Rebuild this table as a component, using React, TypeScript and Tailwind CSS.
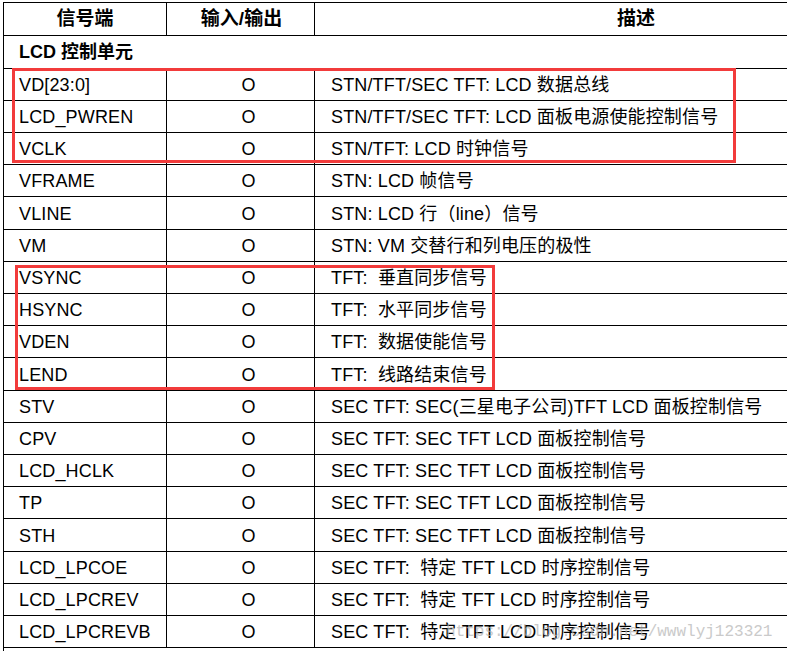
import React from "react";

type Row = { name: string; io: string; desc: string; h: string };

const rows: Row[] = [
  { name: "VD[23:0]", io: "O", desc: "STN/TFT/SEC TFT: LCD 数据总线", h: "h-[32px]" },
  { name: "LCD_PWREN", io: "O", desc: "STN/TFT/SEC TFT: LCD 面板电源使能控制信号", h: "h-[32px]" },
  { name: "VCLK", io: "O", desc: "STN/TFT: LCD 时钟信号", h: "h-[32px]" },
  { name: "VFRAME", io: "O", desc: "STN: LCD 帧信号", h: "h-[32px]" },
  { name: "VLINE", io: "O", desc: "STN: LCD 行（line）信号", h: "h-[33px]" },
  { name: "VM", io: "O", desc: "STN: VM 交替行和列电压的极性", h: "h-[32px]" },
  { name: "VSYNC", io: "O", desc: "TFT:  垂直同步信号", h: "h-[32px]" },
  { name: "HSYNC", io: "O", desc: "TFT:  水平同步信号", h: "h-[32px]" },
  { name: "VDEN", io: "O", desc: "TFT:  数据使能信号", h: "h-[32px]" },
  { name: "LEND", io: "O", desc: "TFT:  线路结束信号", h: "h-[33px]" },
  { name: "STV", io: "O", desc: "SEC TFT: SEC(三星电子公司)TFT LCD 面板控制信号", h: "h-[32px]" },
  { name: "CPV", io: "O", desc: "SEC TFT: SEC TFT LCD 面板控制信号", h: "h-[32px]" },
  { name: "LCD_HCLK", io: "O", desc: "SEC TFT: SEC TFT LCD 面板控制信号", h: "h-[32px]" },
  { name: "TP", io: "O", desc: "SEC TFT: SEC TFT LCD 面板控制信号", h: "h-[32px]" },
  { name: "STH", io: "O", desc: "SEC TFT: SEC TFT LCD 面板控制信号", h: "h-[33px]" },
  { name: "LCD_LPCOE", io: "O", desc: "SEC TFT:  特定 TFT LCD 时序控制信号", h: "h-[32px]" },
  { name: "LCD_LPCREV", io: "O", desc: "SEC TFT:  特定 TFT LCD 时序控制信号", h: "h-[32px]" },
  { name: "LCD_LPCREVB", io: "O", desc: "SEC TFT:  特定 TFT LCD 时序控制信号", h: "h-[32px]" },
];

export default function App() {
  return (
    <div
      className="relative w-[787px] h-[651px] overflow-hidden bg-white text-black"
      style={{ fontFamily: '"Liberation Sans", Arial, "Noto Sans CJK SC", sans-serif' }}
    >
      <div className="mt-[2px] ml-[3px] w-[953px] border-l border-t border-black">
        {/* header */}
        <div className="flex h-[33px] border-b border-black text-[19px] font-bold">
          <div className="w-[163px] shrink-0 border-r border-black flex items-center justify-center">信号端</div>
          <div className="w-[148px] shrink-0 border-r border-black flex items-center justify-center pl-[2px]">输入/输出</div>
          <div className="w-[642px] shrink-0 flex items-center justify-center">描述</div>
        </div>
        {/* section */}
        <div className="flex h-[33px] items-center border-b border-black pl-[15px] pt-[1px] text-[18px] font-bold">
          LCD 控制单元
        </div>
        {rows.map((r) => (
          <div key={r.name} className={`flex ${r.h} border-b border-black text-[18px] tracking-[0.15px]`}>
            <div className="w-[163px] shrink-0 border-r border-black flex items-center pl-[15px] pt-[2px]">{r.name}</div>
            <div className="w-[148px] shrink-0 border-r border-black flex items-center justify-center pl-[16px] pt-[2px]">{r.io}</div>
            <div className="w-[642px] shrink-0 flex items-center pl-[16px] pt-[2px] whitespace-pre">{r.desc}</div>
          </div>
        ))}
        <div className="h-[20px]" />
      </div>

      {/* red highlight boxes */}
      <div className="absolute left-[12px] top-[68px] w-[724px] h-[95px] border-[3px] border-[#f23b3b]" />
      <div className="absolute left-[15px] top-[265px] w-[480px] h-[125px] border-[3px] border-[#f23b3b]" />

      {/* watermark */}
      <div
        className="absolute left-[446px] top-[622px] text-[16px] leading-[20px] text-[#b4b4b4] opacity-70 whitespace-pre"
        style={{ fontFamily: '"Liberation Mono", "Courier New", monospace' }}
      >
        https://blog.csdn.net/wwwlyj123321
      </div>
    </div>
  );
}
